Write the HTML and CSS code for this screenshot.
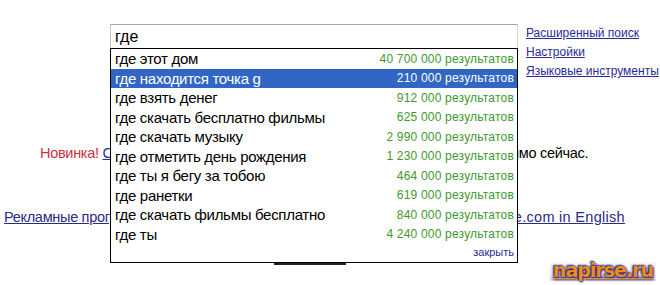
FILE: index.html
```html
<!DOCTYPE html>
<html lang="ru">
<head>
<meta charset="utf-8">
<link rel="stylesheet" href="styles.css">
</head>
<body>
<div class="page">
  <div class="search-row">
    <div class="query">где</div>
    <div class="side-links">
      <a href="#">Расширенный поиск</a>
      <a href="#">Настройки</a>
      <a href="#">Языковые инструменты</a>
    </div>
  </div>
  <div class="promo"><span class="new">Новинка!</span> <a href="#">Сделайте Google стартовой страницей в вашем браузере</a> прямо сейчас.</div>
  <div class="footer">
    <a class="ru" href="#">Рекламные программы</a>
    <a class="ru" href="#">Решения для бизнеса</a>
    <a class="ru" href="#">Всё о Google</a>
    <a class="en" href="#">Google.com in English</a>
  </div>
  <div class="footer-rule"></div>
</div>

<div class="suggest">
  <div class="row"><span class="q">где этот дом</span><span class="n">40 700 000 результатов</span></div>
  <div class="row sel"><span class="q">где находится точка g</span><span class="n">210 000 результатов</span></div>
  <div class="row"><span class="q">где взять денег</span><span class="n">912 000 результатов</span></div>
  <div class="row"><span class="q">где скачать бесплатно фильмы</span><span class="n">625 000 результатов</span></div>
  <div class="row"><span class="q">где скачать музыку</span><span class="n">2 990 000 результатов</span></div>
  <div class="row"><span class="q">где отметить день рождения</span><span class="n">1 230 000 результатов</span></div>
  <div class="row"><span class="q">где ты я бегу за тобою</span><span class="n">464 000 результатов</span></div>
  <div class="row"><span class="q">где ранетки</span><span class="n">619 000 результатов</span></div>
  <div class="row"><span class="q">где скачать фильмы бесплатно</span><span class="n">840 000 результатов</span></div>
  <div class="row"><span class="q">где ты</span><span class="n">4 240 000 результатов</span></div>
  <div class="close"><a href="#">закрыть</a></div>
</div>

<div class="watermark">napirse.ru</div>
</body>
</html>
```
FILE: styles.css
```css
html, body {
  margin: 0;
  padding: 0;
  background: #fff;
}
body {
  width: 660px;
  height: 285px;
  overflow: hidden;
  position: relative;
  font-family: "Liberation Sans", Arial, sans-serif;
  color: #000;
}
.page {
  padding-top: 24px;
  white-space: nowrap;
}
.search-row {
  display: flex;
  align-items: flex-start;
  padding-left: 110px;
}
.query {
  width: 402px;
  height: 24px;
  border-top: 1px solid #a8a8a8;
  border-left: 1px solid #c8c8c8;
  border-right: 1px solid #d8d8d8;
  padding-left: 4px;
  font-size: 16px;
  line-height: 24px;
}
.side-links {
  display: flex;
  flex-direction: column;
  margin-left: 8px;
  font-size: 12px;
  line-height: 19px;
}
.side-links a {
  color: #2a2a9a;
}
.promo {
  margin-top: 62px;
  padding-left: 40px;
  font-size: 14.5px;
  letter-spacing: -0.3px;
  line-height: 20px;
}
.promo .new { color: #d0303c; }
.promo a { color: #2a2a9a; letter-spacing: 0; }
.footer {
  display: flex;
  justify-content: space-between;
  width: 621px;
  margin-top: 44px;
  padding-left: 4px;
  font-size: 14.5px;
  line-height: 20px;
}
.footer a { color: #2a2a8a; }
.footer .ru { letter-spacing: -0.3px; }
.footer .en { letter-spacing: 0.3px; }
.footer-rule {
  margin: 36px 0 0 274px;
  width: 72px;
  border-top: 2px solid #222;
}

.suggest {
  position: absolute;
  left: 110px;
  top: 48px;
  width: 406px;
  border: 1px solid #000;
  background: #fff;
}
.row {
  display: flex;
  justify-content: space-between;
  align-items: center;
  height: 19.5px;
  padding: 0 3px 0 4px;
  white-space: nowrap;
}
.row .q {
  font-size: 15px;
  letter-spacing: -0.3px;
}
.row .n {
  font-size: 12px;
  letter-spacing: 0.2px;
  color: #3d9a2e;
}
.row.sel {
  background: #3166c4;
}
.row.sel .q, .row.sel .n {
  color: #fff;
}
.close {
  text-align: right;
  padding: 2px 3px 3px 0;
  font-size: 11px;
  line-height: 13px;
}
.close a {
  color: #2a2a9a;
  text-decoration: none;
}
.watermark {
  position: absolute;
  right: 4px;
  bottom: 4px;
  padding: 0 3px;
  font-family: "DejaVu Sans", sans-serif;
  font-weight: bold;
  font-size: 19px;
  letter-spacing: -1px;
  color: #f08a1c;
  text-decoration: underline;
  text-shadow: 0 0 2px #202070, 1px 1px 2px #202070, -1px -1px 2px #202070;
  background: linear-gradient(#fff, #e4e0f0);
}
```
